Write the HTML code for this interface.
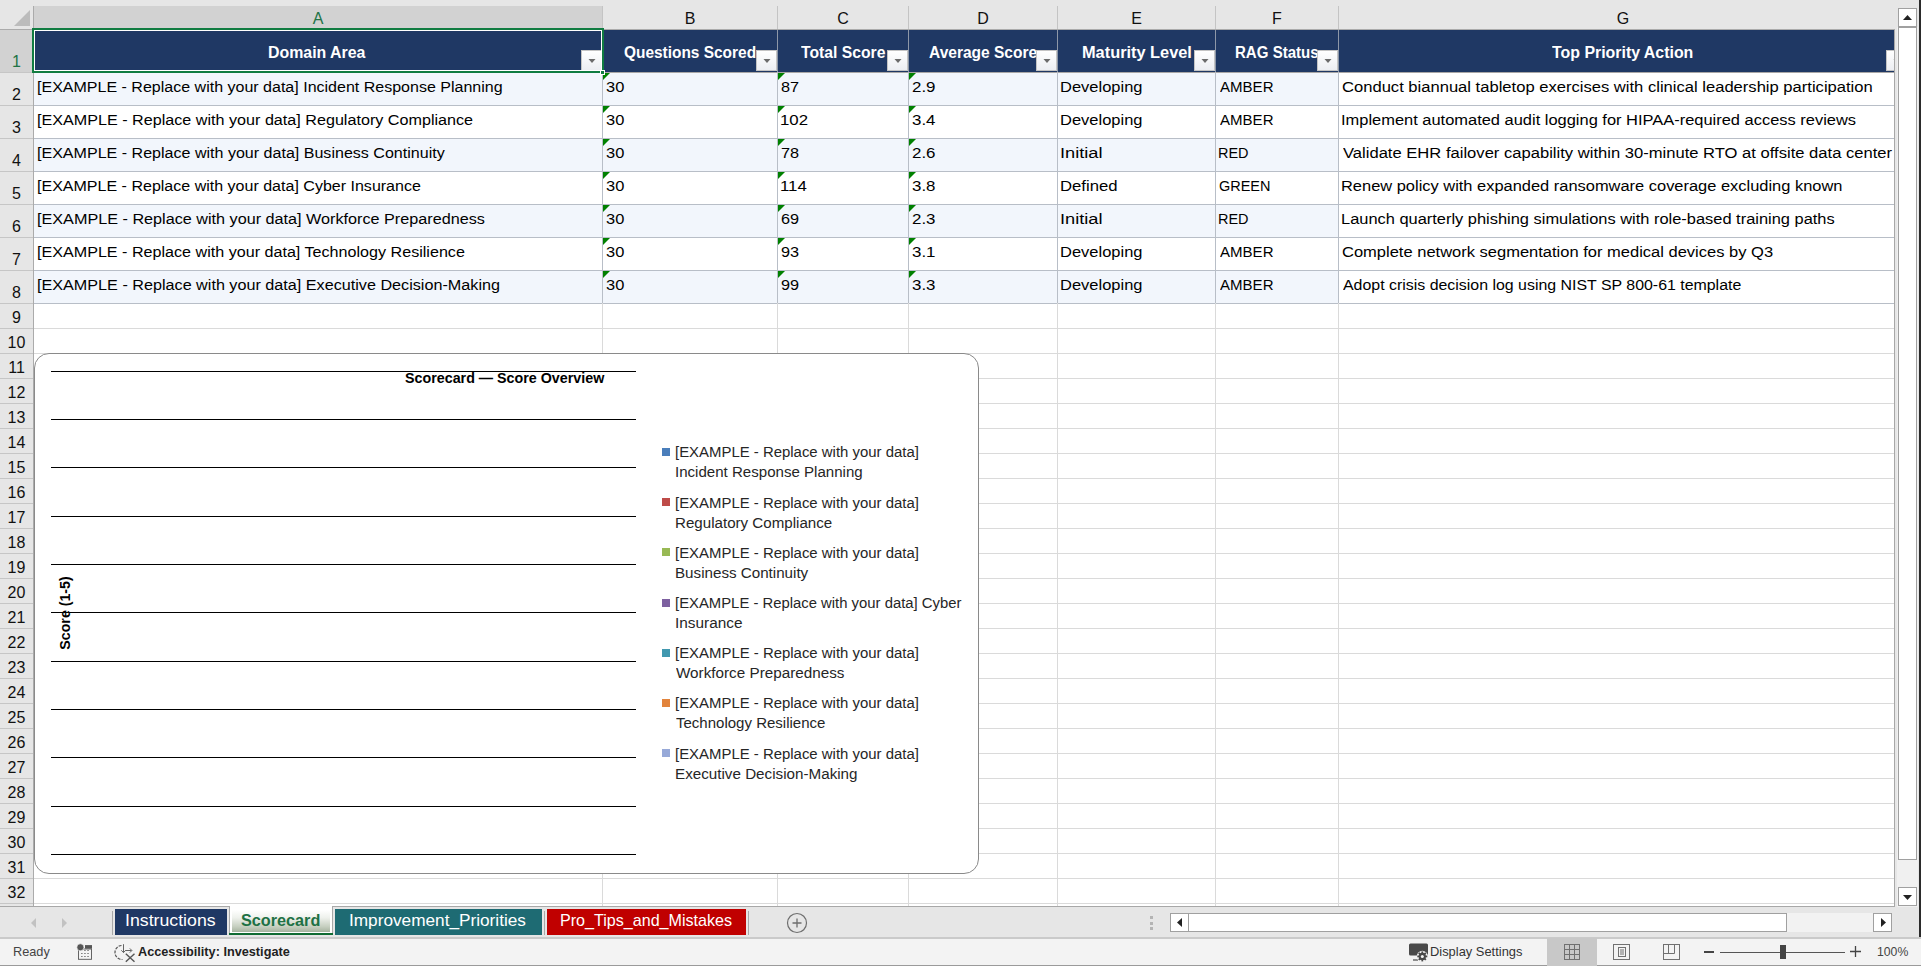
<!DOCTYPE html><html><head><meta charset="utf-8"><style>
*{margin:0;padding:0;box-sizing:border-box}
html,body{width:1921px;height:966px;overflow:hidden;background:#e6e6e6;font-family:"Liberation Sans", sans-serif;position:relative}
.a{position:absolute}
.t{position:absolute;white-space:nowrap;line-height:1}
</style></head><body>
<div class="a" style="left:34px;top:30px;width:1860px;height:876px;background:#fff;"></div>
<div class="a" style="left:34px;top:30px;width:1860px;height:42px;background:#1f3864;"></div>
<div class="a" style="left:34px;top:72px;width:1304px;height:33px;background:#f2f6fc;"></div>
<div class="a" style="left:34px;top:138px;width:1304px;height:33px;background:#f2f6fc;"></div>
<div class="a" style="left:34px;top:204px;width:1304px;height:33px;background:#f2f6fc;"></div>
<div class="a" style="left:34px;top:270px;width:1304px;height:33px;background:#f2f6fc;"></div>
<div class="a" style="left:34px;top:72px;width:1860px;height:1px;background:#a9a7a6;"></div>
<div class="a" style="left:34px;top:105px;width:1860px;height:1px;background:#b8bec7;"></div>
<div class="a" style="left:34px;top:138px;width:1860px;height:1px;background:#b8bec7;"></div>
<div class="a" style="left:34px;top:171px;width:1860px;height:1px;background:#b8bec7;"></div>
<div class="a" style="left:34px;top:204px;width:1860px;height:1px;background:#b8bec7;"></div>
<div class="a" style="left:34px;top:237px;width:1860px;height:1px;background:#b8bec7;"></div>
<div class="a" style="left:34px;top:270px;width:1860px;height:1px;background:#b8bec7;"></div>
<div class="a" style="left:34px;top:303px;width:1860px;height:1px;background:#b8bec7;"></div>
<div class="a" style="left:34px;top:328px;width:1860px;height:1px;background:#dadada;"></div>
<div class="a" style="left:34px;top:353px;width:1860px;height:1px;background:#dadada;"></div>
<div class="a" style="left:34px;top:378px;width:1860px;height:1px;background:#dadada;"></div>
<div class="a" style="left:34px;top:403px;width:1860px;height:1px;background:#dadada;"></div>
<div class="a" style="left:34px;top:428px;width:1860px;height:1px;background:#dadada;"></div>
<div class="a" style="left:34px;top:453px;width:1860px;height:1px;background:#dadada;"></div>
<div class="a" style="left:34px;top:478px;width:1860px;height:1px;background:#dadada;"></div>
<div class="a" style="left:34px;top:503px;width:1860px;height:1px;background:#dadada;"></div>
<div class="a" style="left:34px;top:528px;width:1860px;height:1px;background:#dadada;"></div>
<div class="a" style="left:34px;top:553px;width:1860px;height:1px;background:#dadada;"></div>
<div class="a" style="left:34px;top:578px;width:1860px;height:1px;background:#dadada;"></div>
<div class="a" style="left:34px;top:603px;width:1860px;height:1px;background:#dadada;"></div>
<div class="a" style="left:34px;top:628px;width:1860px;height:1px;background:#dadada;"></div>
<div class="a" style="left:34px;top:653px;width:1860px;height:1px;background:#dadada;"></div>
<div class="a" style="left:34px;top:678px;width:1860px;height:1px;background:#dadada;"></div>
<div class="a" style="left:34px;top:703px;width:1860px;height:1px;background:#dadada;"></div>
<div class="a" style="left:34px;top:728px;width:1860px;height:1px;background:#dadada;"></div>
<div class="a" style="left:34px;top:753px;width:1860px;height:1px;background:#dadada;"></div>
<div class="a" style="left:34px;top:778px;width:1860px;height:1px;background:#dadada;"></div>
<div class="a" style="left:34px;top:803px;width:1860px;height:1px;background:#dadada;"></div>
<div class="a" style="left:34px;top:828px;width:1860px;height:1px;background:#dadada;"></div>
<div class="a" style="left:34px;top:853px;width:1860px;height:1px;background:#dadada;"></div>
<div class="a" style="left:34px;top:878px;width:1860px;height:1px;background:#dadada;"></div>
<div class="a" style="left:34px;top:903px;width:1860px;height:1px;background:#dadada;"></div>
<div class="a" style="left:602px;top:30px;width:1px;height:42px;background:#8d97a8;"></div>
<div class="a" style="left:602px;top:72px;width:1px;height:231px;background:#b8bec7;"></div>
<div class="a" style="left:602px;top:303px;width:1px;height:603px;background:#dadada;"></div>
<div class="a" style="left:777px;top:30px;width:1px;height:42px;background:#8d97a8;"></div>
<div class="a" style="left:777px;top:72px;width:1px;height:231px;background:#b8bec7;"></div>
<div class="a" style="left:777px;top:303px;width:1px;height:603px;background:#dadada;"></div>
<div class="a" style="left:908px;top:30px;width:1px;height:42px;background:#8d97a8;"></div>
<div class="a" style="left:908px;top:72px;width:1px;height:231px;background:#b8bec7;"></div>
<div class="a" style="left:908px;top:303px;width:1px;height:603px;background:#dadada;"></div>
<div class="a" style="left:1057px;top:30px;width:1px;height:42px;background:#8d97a8;"></div>
<div class="a" style="left:1057px;top:72px;width:1px;height:231px;background:#b8bec7;"></div>
<div class="a" style="left:1057px;top:303px;width:1px;height:603px;background:#dadada;"></div>
<div class="a" style="left:1215px;top:30px;width:1px;height:42px;background:#8d97a8;"></div>
<div class="a" style="left:1215px;top:72px;width:1px;height:231px;background:#b8bec7;"></div>
<div class="a" style="left:1215px;top:303px;width:1px;height:603px;background:#dadada;"></div>
<div class="a" style="left:1338px;top:30px;width:1px;height:42px;background:#8d97a8;"></div>
<div class="a" style="left:1338px;top:72px;width:1px;height:231px;background:#b8bec7;"></div>
<div class="a" style="left:1338px;top:303px;width:1px;height:603px;background:#dadada;"></div>
<div class="a" style="left:1894px;top:29px;width:1px;height:877px;background:#a8a8a8;"></div>
<div class="a" style="left:0px;top:906px;width:1895px;height:1px;background:#a8a8a8;"></div>
<div class="a" style="left:34px;top:6px;width:568px;height:23px;background:#d2d2d2;"></div>
<div class="t" style="left:34px;top:10.76px;width:568px;text-align:center;font-size:16px;font-weight:400;color:#217346;">A</div>
<div class="t" style="left:603px;top:10.76px;width:174px;text-align:center;font-size:16px;font-weight:400;color:#111;">B</div>
<div class="a" style="left:602px;top:6px;width:1px;height:23px;background:#c4c4c4;"></div>
<div class="t" style="left:778px;top:10.76px;width:130px;text-align:center;font-size:16px;font-weight:400;color:#111;">C</div>
<div class="a" style="left:777px;top:6px;width:1px;height:23px;background:#c4c4c4;"></div>
<div class="t" style="left:909px;top:10.76px;width:148px;text-align:center;font-size:16px;font-weight:400;color:#111;">D</div>
<div class="a" style="left:908px;top:6px;width:1px;height:23px;background:#c4c4c4;"></div>
<div class="t" style="left:1058px;top:10.76px;width:157px;text-align:center;font-size:16px;font-weight:400;color:#111;">E</div>
<div class="a" style="left:1057px;top:6px;width:1px;height:23px;background:#c4c4c4;"></div>
<div class="t" style="left:1216px;top:10.76px;width:122px;text-align:center;font-size:16px;font-weight:400;color:#111;">F</div>
<div class="a" style="left:1215px;top:6px;width:1px;height:23px;background:#c4c4c4;"></div>
<div class="t" style="left:1339px;top:10.76px;width:568px;text-align:center;font-size:16px;font-weight:400;color:#111;">G</div>
<div class="a" style="left:1338px;top:6px;width:1px;height:23px;background:#c4c4c4;"></div>
<div class="a" style="left:0px;top:29px;width:1894px;height:1px;background:#ababab;"></div>
<svg class="a" style="left:0;top:0" width="34" height="29"><polygon points="14,26 30,26 30,10" fill="#bcbcbc"/></svg>
<div class="a" style="left:33px;top:6px;width:1px;height:900px;background:#ababab;"></div>
<div class="a" style="left:0px;top:30px;width:33px;height:42px;background:#d2d2d2;"></div>
<div class="a" style="left:0px;top:72px;width:33px;height:1px;background:#c6c6c6;"></div>
<div class="t" style="left:0px;top:53.96px;width:33px;text-align:center;font-size:16px;font-weight:400;color:#217346;">1</div>
<div class="a" style="left:0px;top:105px;width:33px;height:1px;background:#c6c6c6;"></div>
<div class="t" style="left:0px;top:86.96px;width:33px;text-align:center;font-size:16px;font-weight:400;color:#111;">2</div>
<div class="a" style="left:0px;top:138px;width:33px;height:1px;background:#c6c6c6;"></div>
<div class="t" style="left:0px;top:119.96px;width:33px;text-align:center;font-size:16px;font-weight:400;color:#111;">3</div>
<div class="a" style="left:0px;top:171px;width:33px;height:1px;background:#c6c6c6;"></div>
<div class="t" style="left:0px;top:152.96px;width:33px;text-align:center;font-size:16px;font-weight:400;color:#111;">4</div>
<div class="a" style="left:0px;top:204px;width:33px;height:1px;background:#c6c6c6;"></div>
<div class="t" style="left:0px;top:185.96px;width:33px;text-align:center;font-size:16px;font-weight:400;color:#111;">5</div>
<div class="a" style="left:0px;top:237px;width:33px;height:1px;background:#c6c6c6;"></div>
<div class="t" style="left:0px;top:218.96px;width:33px;text-align:center;font-size:16px;font-weight:400;color:#111;">6</div>
<div class="a" style="left:0px;top:270px;width:33px;height:1px;background:#c6c6c6;"></div>
<div class="t" style="left:0px;top:251.96px;width:33px;text-align:center;font-size:16px;font-weight:400;color:#111;">7</div>
<div class="a" style="left:0px;top:303px;width:33px;height:1px;background:#c6c6c6;"></div>
<div class="t" style="left:0px;top:284.96px;width:33px;text-align:center;font-size:16px;font-weight:400;color:#111;">8</div>
<div class="a" style="left:0px;top:328px;width:33px;height:1px;background:#c6c6c6;"></div>
<div class="t" style="left:0px;top:309.96px;width:33px;text-align:center;font-size:16px;font-weight:400;color:#111;">9</div>
<div class="a" style="left:0px;top:353px;width:33px;height:1px;background:#c6c6c6;"></div>
<div class="t" style="left:0px;top:334.96px;width:33px;text-align:center;font-size:16px;font-weight:400;color:#111;">10</div>
<div class="a" style="left:0px;top:378px;width:33px;height:1px;background:#c6c6c6;"></div>
<div class="t" style="left:0px;top:359.96px;width:33px;text-align:center;font-size:16px;font-weight:400;color:#111;">11</div>
<div class="a" style="left:0px;top:403px;width:33px;height:1px;background:#c6c6c6;"></div>
<div class="t" style="left:0px;top:384.96px;width:33px;text-align:center;font-size:16px;font-weight:400;color:#111;">12</div>
<div class="a" style="left:0px;top:428px;width:33px;height:1px;background:#c6c6c6;"></div>
<div class="t" style="left:0px;top:409.96px;width:33px;text-align:center;font-size:16px;font-weight:400;color:#111;">13</div>
<div class="a" style="left:0px;top:453px;width:33px;height:1px;background:#c6c6c6;"></div>
<div class="t" style="left:0px;top:434.96px;width:33px;text-align:center;font-size:16px;font-weight:400;color:#111;">14</div>
<div class="a" style="left:0px;top:478px;width:33px;height:1px;background:#c6c6c6;"></div>
<div class="t" style="left:0px;top:459.96px;width:33px;text-align:center;font-size:16px;font-weight:400;color:#111;">15</div>
<div class="a" style="left:0px;top:503px;width:33px;height:1px;background:#c6c6c6;"></div>
<div class="t" style="left:0px;top:484.96px;width:33px;text-align:center;font-size:16px;font-weight:400;color:#111;">16</div>
<div class="a" style="left:0px;top:528px;width:33px;height:1px;background:#c6c6c6;"></div>
<div class="t" style="left:0px;top:509.96px;width:33px;text-align:center;font-size:16px;font-weight:400;color:#111;">17</div>
<div class="a" style="left:0px;top:553px;width:33px;height:1px;background:#c6c6c6;"></div>
<div class="t" style="left:0px;top:534.96px;width:33px;text-align:center;font-size:16px;font-weight:400;color:#111;">18</div>
<div class="a" style="left:0px;top:578px;width:33px;height:1px;background:#c6c6c6;"></div>
<div class="t" style="left:0px;top:559.96px;width:33px;text-align:center;font-size:16px;font-weight:400;color:#111;">19</div>
<div class="a" style="left:0px;top:603px;width:33px;height:1px;background:#c6c6c6;"></div>
<div class="t" style="left:0px;top:584.96px;width:33px;text-align:center;font-size:16px;font-weight:400;color:#111;">20</div>
<div class="a" style="left:0px;top:628px;width:33px;height:1px;background:#c6c6c6;"></div>
<div class="t" style="left:0px;top:609.96px;width:33px;text-align:center;font-size:16px;font-weight:400;color:#111;">21</div>
<div class="a" style="left:0px;top:653px;width:33px;height:1px;background:#c6c6c6;"></div>
<div class="t" style="left:0px;top:634.96px;width:33px;text-align:center;font-size:16px;font-weight:400;color:#111;">22</div>
<div class="a" style="left:0px;top:678px;width:33px;height:1px;background:#c6c6c6;"></div>
<div class="t" style="left:0px;top:659.96px;width:33px;text-align:center;font-size:16px;font-weight:400;color:#111;">23</div>
<div class="a" style="left:0px;top:703px;width:33px;height:1px;background:#c6c6c6;"></div>
<div class="t" style="left:0px;top:684.96px;width:33px;text-align:center;font-size:16px;font-weight:400;color:#111;">24</div>
<div class="a" style="left:0px;top:728px;width:33px;height:1px;background:#c6c6c6;"></div>
<div class="t" style="left:0px;top:709.96px;width:33px;text-align:center;font-size:16px;font-weight:400;color:#111;">25</div>
<div class="a" style="left:0px;top:753px;width:33px;height:1px;background:#c6c6c6;"></div>
<div class="t" style="left:0px;top:734.96px;width:33px;text-align:center;font-size:16px;font-weight:400;color:#111;">26</div>
<div class="a" style="left:0px;top:778px;width:33px;height:1px;background:#c6c6c6;"></div>
<div class="t" style="left:0px;top:759.96px;width:33px;text-align:center;font-size:16px;font-weight:400;color:#111;">27</div>
<div class="a" style="left:0px;top:803px;width:33px;height:1px;background:#c6c6c6;"></div>
<div class="t" style="left:0px;top:784.96px;width:33px;text-align:center;font-size:16px;font-weight:400;color:#111;">28</div>
<div class="a" style="left:0px;top:828px;width:33px;height:1px;background:#c6c6c6;"></div>
<div class="t" style="left:0px;top:809.96px;width:33px;text-align:center;font-size:16px;font-weight:400;color:#111;">29</div>
<div class="a" style="left:0px;top:853px;width:33px;height:1px;background:#c6c6c6;"></div>
<div class="t" style="left:0px;top:834.96px;width:33px;text-align:center;font-size:16px;font-weight:400;color:#111;">30</div>
<div class="a" style="left:0px;top:878px;width:33px;height:1px;background:#c6c6c6;"></div>
<div class="t" style="left:0px;top:859.96px;width:33px;text-align:center;font-size:16px;font-weight:400;color:#111;">31</div>
<div class="a" style="left:0px;top:903px;width:33px;height:1px;background:#c6c6c6;"></div>
<div class="t" style="left:0px;top:884.96px;width:33px;text-align:center;font-size:16px;font-weight:400;color:#111;">32</div>
<div class="t" style="left:268.42px;top:45.26px;font-size:16px;font-weight:700;color:#fff;transform:scaleX(0.9928);transform-origin:0 0">Domain Area</div>
<div class="t" style="left:624.13px;top:45.26px;font-size:16px;font-weight:700;color:#fff;transform:scaleX(0.9645);transform-origin:0 0">Questions Scored</div>
<div class="t" style="left:800.94px;top:45.26px;font-size:16px;font-weight:700;color:#fff;transform:scaleX(0.9816);transform-origin:0 0">Total Score</div>
<div class="t" style="left:928.99px;top:45.26px;font-size:16px;font-weight:700;color:#fff;transform:scaleX(0.9699);transform-origin:0 0">Average Score</div>
<div class="t" style="left:1081.62px;top:45.26px;font-size:16px;font-weight:700;color:#fff;transform:scaleX(1.0214);transform-origin:0 0">Maturity Level</div>
<div class="t" style="left:1235.00px;top:45.26px;font-size:16px;font-weight:700;color:#fff;transform:scaleX(0.9409);transform-origin:0 0">RAG Status</div>
<div class="t" style="left:1552.44px;top:45.26px;font-size:16px;font-weight:700;color:#fff;transform:scaleX(0.9938);transform-origin:0 0">Top Priority Action</div>
<div class="a" style="left:581px;top:50px;width:21px;height:21px;background:linear-gradient(#fff,#eceef2);border:1px solid #c4c4c4;overflow:hidden"><svg class="a" style="left:5px;top:7px" width="10" height="6"><polygon points="1.5,1 8.5,1 5,5" fill="#6b6b6b"/></svg></div>
<div class="a" style="left:756px;top:50px;width:21px;height:21px;background:linear-gradient(#fff,#eceef2);border:1px solid #c4c4c4;overflow:hidden"><svg class="a" style="left:5px;top:7px" width="10" height="6"><polygon points="1.5,1 8.5,1 5,5" fill="#6b6b6b"/></svg></div>
<div class="a" style="left:887px;top:50px;width:21px;height:21px;background:linear-gradient(#fff,#eceef2);border:1px solid #c4c4c4;overflow:hidden"><svg class="a" style="left:5px;top:7px" width="10" height="6"><polygon points="1.5,1 8.5,1 5,5" fill="#6b6b6b"/></svg></div>
<div class="a" style="left:1036px;top:50px;width:21px;height:21px;background:linear-gradient(#fff,#eceef2);border:1px solid #c4c4c4;overflow:hidden"><svg class="a" style="left:5px;top:7px" width="10" height="6"><polygon points="1.5,1 8.5,1 5,5" fill="#6b6b6b"/></svg></div>
<div class="a" style="left:1194px;top:50px;width:21px;height:21px;background:linear-gradient(#fff,#eceef2);border:1px solid #c4c4c4;overflow:hidden"><svg class="a" style="left:5px;top:7px" width="10" height="6"><polygon points="1.5,1 8.5,1 5,5" fill="#6b6b6b"/></svg></div>
<div class="a" style="left:1317px;top:50px;width:21px;height:21px;background:linear-gradient(#fff,#eceef2);border:1px solid #c4c4c4;overflow:hidden"><svg class="a" style="left:5px;top:7px" width="10" height="6"><polygon points="1.5,1 8.5,1 5,5" fill="#6b6b6b"/></svg></div>
<div class="a" style="left:1886px;top:50px;width:8px;height:21px;background:linear-gradient(#fff,#eceef2);border:1px solid #c4c4c4;border-right:none;overflow:hidden"><svg class="a" style="left:5px;top:7px" width="10" height="6"><polygon points="1.5,1 8.5,1 5,5" fill="#6b6b6b"/></svg></div>
<div class="t" style="left:37.48px;top:79.33px;font-size:15.2px;font-weight:400;color:#000;transform:scaleX(1.0546);transform-origin:0 0">[EXAMPLE - Replace with your data] Incident Response Planning</div>
<div class="t" style="left:606.11px;top:79.33px;font-size:15.2px;font-weight:400;color:#000;transform:scaleX(1.0817);transform-origin:0 0">30</div>
<div class="t" style="left:780.95px;top:79.33px;font-size:15.2px;font-weight:400;color:#000;transform:scaleX(1.0707);transform-origin:0 0">87</div>
<div class="t" style="left:911.75px;top:79.33px;font-size:15.2px;font-weight:400;color:#000;transform:scaleX(1.1135);transform-origin:0 0">2.9</div>
<div class="t" style="left:1060.28px;top:79.33px;font-size:15.2px;font-weight:400;color:#000;transform:scaleX(1.0854);transform-origin:0 0">Developing</div>
<div class="t" style="left:1219.60px;top:79.33px;font-size:15.2px;font-weight:400;color:#000;transform:scaleX(0.9904);transform-origin:0 0">AMBER</div>
<div class="t" style="left:1341.77px;top:79.33px;font-size:15.2px;font-weight:400;color:#000;transform:scaleX(1.0914);transform-origin:0 0">Conduct biannual tabletop exercises with clinical leadership participation</div>
<svg class="a" style="left:603px;top:73px" width="8" height="8"><polygon points="0,0 7,0 0,7" fill="#008000"/></svg>
<svg class="a" style="left:778px;top:73px" width="8" height="8"><polygon points="0,0 7,0 0,7" fill="#008000"/></svg>
<svg class="a" style="left:909px;top:73px" width="8" height="8"><polygon points="0,0 7,0 0,7" fill="#008000"/></svg>
<div class="t" style="left:37.47px;top:112.33px;font-size:15.2px;font-weight:400;color:#000;transform:scaleX(1.0629);transform-origin:0 0">[EXAMPLE - Replace with your data] Regulatory Compliance</div>
<div class="t" style="left:606.11px;top:112.33px;font-size:15.2px;font-weight:400;color:#000;transform:scaleX(1.0817);transform-origin:0 0">30</div>
<div class="t" style="left:780.42px;top:112.33px;font-size:15.2px;font-weight:400;color:#000;transform:scaleX(1.1062);transform-origin:0 0">102</div>
<div class="t" style="left:911.75px;top:112.33px;font-size:15.2px;font-weight:400;color:#000;transform:scaleX(1.1135);transform-origin:0 0">3.4</div>
<div class="t" style="left:1060.28px;top:112.33px;font-size:15.2px;font-weight:400;color:#000;transform:scaleX(1.0854);transform-origin:0 0">Developing</div>
<div class="t" style="left:1219.60px;top:112.33px;font-size:15.2px;font-weight:400;color:#000;transform:scaleX(0.9904);transform-origin:0 0">AMBER</div>
<div class="t" style="left:1341.12px;top:112.33px;font-size:15.2px;font-weight:400;color:#000;transform:scaleX(1.0824);transform-origin:0 0">Implement automated audit logging for HIPAA-required access reviews</div>
<svg class="a" style="left:603px;top:106px" width="8" height="8"><polygon points="0,0 7,0 0,7" fill="#008000"/></svg>
<svg class="a" style="left:778px;top:106px" width="8" height="8"><polygon points="0,0 7,0 0,7" fill="#008000"/></svg>
<svg class="a" style="left:909px;top:106px" width="8" height="8"><polygon points="0,0 7,0 0,7" fill="#008000"/></svg>
<div class="t" style="left:37.48px;top:145.33px;font-size:15.2px;font-weight:400;color:#000;transform:scaleX(1.0568);transform-origin:0 0">[EXAMPLE - Replace with your data] Business Continuity</div>
<div class="t" style="left:606.11px;top:145.33px;font-size:15.2px;font-weight:400;color:#000;transform:scaleX(1.0817);transform-origin:0 0">30</div>
<div class="t" style="left:780.95px;top:145.33px;font-size:15.2px;font-weight:400;color:#000;transform:scaleX(1.0707);transform-origin:0 0">78</div>
<div class="t" style="left:911.75px;top:145.33px;font-size:15.2px;font-weight:400;color:#000;transform:scaleX(1.1135);transform-origin:0 0">2.6</div>
<div class="t" style="left:1059.96px;top:145.33px;font-size:15.2px;font-weight:400;color:#000;transform:scaleX(1.1998);transform-origin:0 0">Initial</div>
<div class="t" style="left:1218.44px;top:145.33px;font-size:15.2px;font-weight:400;color:#000;transform:scaleX(0.9525);transform-origin:0 0">RED</div>
<div class="t" style="left:1342.60px;top:145.33px;font-size:15.2px;font-weight:400;color:#000;transform:scaleX(1.0919);transform-origin:0 0">Validate EHR failover capability within 30-minute RTO at offsite data center</div>
<svg class="a" style="left:603px;top:139px" width="8" height="8"><polygon points="0,0 7,0 0,7" fill="#008000"/></svg>
<svg class="a" style="left:778px;top:139px" width="8" height="8"><polygon points="0,0 7,0 0,7" fill="#008000"/></svg>
<svg class="a" style="left:909px;top:139px" width="8" height="8"><polygon points="0,0 7,0 0,7" fill="#008000"/></svg>
<div class="t" style="left:37.48px;top:178.33px;font-size:15.2px;font-weight:400;color:#000;transform:scaleX(1.0551);transform-origin:0 0">[EXAMPLE - Replace with your data] Cyber Insurance</div>
<div class="t" style="left:606.11px;top:178.33px;font-size:15.2px;font-weight:400;color:#000;transform:scaleX(1.0817);transform-origin:0 0">30</div>
<div class="t" style="left:780.42px;top:178.33px;font-size:15.2px;font-weight:400;color:#000;transform:scaleX(1.1062);transform-origin:0 0">114</div>
<div class="t" style="left:911.75px;top:178.33px;font-size:15.2px;font-weight:400;color:#000;transform:scaleX(1.1135);transform-origin:0 0">3.8</div>
<div class="t" style="left:1060.26px;top:178.33px;font-size:15.2px;font-weight:400;color:#000;transform:scaleX(1.1009);transform-origin:0 0">Defined</div>
<div class="t" style="left:1218.88px;top:178.33px;font-size:15.2px;font-weight:400;color:#000;transform:scaleX(0.9522);transform-origin:0 0">GREEN</div>
<div class="t" style="left:1341.28px;top:178.33px;font-size:15.2px;font-weight:400;color:#000;transform:scaleX(1.0819);transform-origin:0 0">Renew policy with expanded ransomware coverage excluding known</div>
<svg class="a" style="left:603px;top:172px" width="8" height="8"><polygon points="0,0 7,0 0,7" fill="#008000"/></svg>
<svg class="a" style="left:778px;top:172px" width="8" height="8"><polygon points="0,0 7,0 0,7" fill="#008000"/></svg>
<svg class="a" style="left:909px;top:172px" width="8" height="8"><polygon points="0,0 7,0 0,7" fill="#008000"/></svg>
<div class="t" style="left:37.47px;top:211.33px;font-size:15.2px;font-weight:400;color:#000;transform:scaleX(1.0661);transform-origin:0 0">[EXAMPLE - Replace with your data] Workforce Preparedness</div>
<div class="t" style="left:606.11px;top:211.33px;font-size:15.2px;font-weight:400;color:#000;transform:scaleX(1.0817);transform-origin:0 0">30</div>
<div class="t" style="left:780.95px;top:211.33px;font-size:15.2px;font-weight:400;color:#000;transform:scaleX(1.0707);transform-origin:0 0">69</div>
<div class="t" style="left:911.75px;top:211.33px;font-size:15.2px;font-weight:400;color:#000;transform:scaleX(1.1135);transform-origin:0 0">2.3</div>
<div class="t" style="left:1059.96px;top:211.33px;font-size:15.2px;font-weight:400;color:#000;transform:scaleX(1.1998);transform-origin:0 0">Initial</div>
<div class="t" style="left:1218.44px;top:211.33px;font-size:15.2px;font-weight:400;color:#000;transform:scaleX(0.9525);transform-origin:0 0">RED</div>
<div class="t" style="left:1341.29px;top:211.33px;font-size:15.2px;font-weight:400;color:#000;transform:scaleX(1.0809);transform-origin:0 0">Launch quarterly phishing simulations with role-based training paths</div>
<svg class="a" style="left:603px;top:205px" width="8" height="8"><polygon points="0,0 7,0 0,7" fill="#008000"/></svg>
<svg class="a" style="left:778px;top:205px" width="8" height="8"><polygon points="0,0 7,0 0,7" fill="#008000"/></svg>
<svg class="a" style="left:909px;top:205px" width="8" height="8"><polygon points="0,0 7,0 0,7" fill="#008000"/></svg>
<div class="t" style="left:37.47px;top:244.33px;font-size:15.2px;font-weight:400;color:#000;transform:scaleX(1.0611);transform-origin:0 0">[EXAMPLE - Replace with your data] Technology Resilience</div>
<div class="t" style="left:606.11px;top:244.33px;font-size:15.2px;font-weight:400;color:#000;transform:scaleX(1.0817);transform-origin:0 0">30</div>
<div class="t" style="left:780.95px;top:244.33px;font-size:15.2px;font-weight:400;color:#000;transform:scaleX(1.0707);transform-origin:0 0">93</div>
<div class="t" style="left:911.75px;top:244.33px;font-size:15.2px;font-weight:400;color:#000;transform:scaleX(1.1135);transform-origin:0 0">3.1</div>
<div class="t" style="left:1060.28px;top:244.33px;font-size:15.2px;font-weight:400;color:#000;transform:scaleX(1.0854);transform-origin:0 0">Developing</div>
<div class="t" style="left:1219.60px;top:244.33px;font-size:15.2px;font-weight:400;color:#000;transform:scaleX(0.9904);transform-origin:0 0">AMBER</div>
<div class="t" style="left:1341.77px;top:244.33px;font-size:15.2px;font-weight:400;color:#000;transform:scaleX(1.0865);transform-origin:0 0">Complete network segmentation for medical devices by Q3</div>
<svg class="a" style="left:603px;top:238px" width="8" height="8"><polygon points="0,0 7,0 0,7" fill="#008000"/></svg>
<svg class="a" style="left:778px;top:238px" width="8" height="8"><polygon points="0,0 7,0 0,7" fill="#008000"/></svg>
<svg class="a" style="left:909px;top:238px" width="8" height="8"><polygon points="0,0 7,0 0,7" fill="#008000"/></svg>
<div class="t" style="left:37.47px;top:277.33px;font-size:15.2px;font-weight:400;color:#000;transform:scaleX(1.0650);transform-origin:0 0">[EXAMPLE - Replace with your data] Executive Decision-Making</div>
<div class="t" style="left:606.11px;top:277.33px;font-size:15.2px;font-weight:400;color:#000;transform:scaleX(1.0817);transform-origin:0 0">30</div>
<div class="t" style="left:780.95px;top:277.33px;font-size:15.2px;font-weight:400;color:#000;transform:scaleX(1.0707);transform-origin:0 0">99</div>
<div class="t" style="left:911.75px;top:277.33px;font-size:15.2px;font-weight:400;color:#000;transform:scaleX(1.1135);transform-origin:0 0">3.3</div>
<div class="t" style="left:1060.28px;top:277.33px;font-size:15.2px;font-weight:400;color:#000;transform:scaleX(1.0854);transform-origin:0 0">Developing</div>
<div class="t" style="left:1219.60px;top:277.33px;font-size:15.2px;font-weight:400;color:#000;transform:scaleX(0.9904);transform-origin:0 0">AMBER</div>
<div class="t" style="left:1342.60px;top:277.33px;font-size:15.2px;font-weight:400;color:#000;transform:scaleX(1.0476);transform-origin:0 0">Adopt crisis decision log using NIST SP 800-61 template</div>
<svg class="a" style="left:603px;top:271px" width="8" height="8"><polygon points="0,0 7,0 0,7" fill="#008000"/></svg>
<svg class="a" style="left:778px;top:271px" width="8" height="8"><polygon points="0,0 7,0 0,7" fill="#008000"/></svg>
<svg class="a" style="left:909px;top:271px" width="8" height="8"><polygon points="0,0 7,0 0,7" fill="#008000"/></svg>
<div class="a" style="left:32px;top:28px;width:572px;height:45px;border:2px solid #107c41"></div>
<div class="a" style="left:34px;top:30px;width:568px;height:41px;border:1px solid #fff"></div>
<div class="a" style="left:600px;top:70px;width:5px;height:5px;background:#107c41;border:1px solid #fff"></div>
<div class="a" style="left:34px;top:353px;width:945px;height:521px;background:#fff;border:1px solid #8a8a8a;border-radius:15px"></div>
<div class="a" style="left:51px;top:371px;width:585px;height:1px;background:#000"></div>
<div class="a" style="left:51px;top:419px;width:585px;height:1px;background:#000"></div>
<div class="a" style="left:51px;top:467px;width:585px;height:1px;background:#000"></div>
<div class="a" style="left:51px;top:516px;width:585px;height:1px;background:#000"></div>
<div class="a" style="left:51px;top:564px;width:585px;height:1px;background:#000"></div>
<div class="a" style="left:51px;top:612px;width:585px;height:1px;background:#000"></div>
<div class="a" style="left:51px;top:661px;width:585px;height:1px;background:#000"></div>
<div class="a" style="left:51px;top:709px;width:585px;height:1px;background:#000"></div>
<div class="a" style="left:51px;top:757px;width:585px;height:1px;background:#000"></div>
<div class="a" style="left:51px;top:806px;width:585px;height:1px;background:#000"></div>
<div class="a" style="left:51px;top:854px;width:585px;height:1px;background:#000"></div>
<div class="t" style="left:405.21px;top:371.14px;font-size:14.6px;font-weight:700;color:#000;transform:scaleX(0.9787);transform-origin:0 0">Scorecard — Score Overview</div>
<div class="t" style="left:64.8px;top:613px;font-size:14.2px;font-weight:700;color:#000;transform:translate(-50%,-50%) rotate(-90deg);transform-origin:center">Score (1-5)</div>
<div class="a" style="left:662px;top:448px;width:8px;height:8px;background:#4a7ebb;"></div>
<div class="t" style="left:675.05px;top:444.43px;font-size:15.2px;font-weight:400;color:#262626;transform:scaleX(0.9826);transform-origin:0 0">[EXAMPLE - Replace with your data]</div>
<div class="t" style="left:674.74px;top:464.43px;font-size:15.2px;font-weight:400;color:#262626;transform:scaleX(0.9922);transform-origin:0 0">Incident Response Planning</div>
<div class="a" style="left:662px;top:498px;width:8px;height:8px;background:#be4b48;"></div>
<div class="t" style="left:675.05px;top:494.63px;font-size:15.2px;font-weight:400;color:#262626;transform:scaleX(0.9826);transform-origin:0 0">[EXAMPLE - Replace with your data]</div>
<div class="t" style="left:674.89px;top:514.63px;font-size:15.2px;font-weight:400;color:#262626;transform:scaleX(0.9960);transform-origin:0 0">Regulatory Compliance</div>
<div class="a" style="left:662px;top:548px;width:8px;height:8px;background:#98b954;"></div>
<div class="t" style="left:675.05px;top:544.83px;font-size:15.2px;font-weight:400;color:#262626;transform:scaleX(0.9826);transform-origin:0 0">[EXAMPLE - Replace with your data]</div>
<div class="t" style="left:674.89px;top:564.83px;font-size:15.2px;font-weight:400;color:#262626;transform:scaleX(0.9987);transform-origin:0 0">Business Continuity</div>
<div class="a" style="left:662px;top:599px;width:8px;height:8px;background:#7d60a0;"></div>
<div class="t" style="left:675.06px;top:595.03px;font-size:15.2px;font-weight:400;color:#262626;transform:scaleX(0.9778);transform-origin:0 0">[EXAMPLE - Replace with your data] Cyber</div>
<div class="t" style="left:674.72px;top:615.03px;font-size:15.2px;font-weight:400;color:#262626;transform:scaleX(1.0118);transform-origin:0 0">Insurance</div>
<div class="a" style="left:662px;top:649px;width:8px;height:8px;background:#4198af;"></div>
<div class="t" style="left:675.05px;top:645.23px;font-size:15.2px;font-weight:400;color:#262626;transform:scaleX(0.9826);transform-origin:0 0">[EXAMPLE - Replace with your data]</div>
<div class="t" style="left:676.10px;top:665.23px;font-size:15.2px;font-weight:400;color:#262626;transform:scaleX(1.0043);transform-origin:0 0">Workforce Preparedness</div>
<div class="a" style="left:662px;top:699px;width:8px;height:8px;background:#e2843c;"></div>
<div class="t" style="left:675.05px;top:695.43px;font-size:15.2px;font-weight:400;color:#262626;transform:scaleX(0.9826);transform-origin:0 0">[EXAMPLE - Replace with your data]</div>
<div class="t" style="left:675.80px;top:715.43px;font-size:15.2px;font-weight:400;color:#262626;transform:scaleX(0.9888);transform-origin:0 0">Technology Resilience</div>
<div class="a" style="left:662px;top:749px;width:8px;height:8px;background:#97a9d8;"></div>
<div class="t" style="left:675.05px;top:745.63px;font-size:15.2px;font-weight:400;color:#262626;transform:scaleX(0.9826);transform-origin:0 0">[EXAMPLE - Replace with your data]</div>
<div class="t" style="left:674.88px;top:765.63px;font-size:15.2px;font-weight:400;color:#262626;transform:scaleX(1.0011);transform-origin:0 0">Executive Decision-Making</div>
<div class="a" style="left:0px;top:907px;width:1921px;height:31px;background:#e6e6e6;"></div>
<div class="a" style="left:0px;top:937px;width:1921px;height:1px;background:#d0d0d0;"></div>
<svg class="a" style="left:26px;top:915px" width="44" height="16"><polygon points="10,3 10,13 5,8" fill="#c2c2c2"/><polygon points="36,3 36,13 41,8" fill="#c2c2c2"/></svg>
<div class="a" style="left:112px;top:911px;width:1px;height:24px;background:#a8a8a8;"></div>
<div class="a" style="left:115px;top:909px;width:112px;height:26px;background:#1f3864;"></div>
<div class="t" style="left:124.90px;top:911.61px;font-size:17px;font-weight:400;color:#fff;transform:scaleX(1.0426);transform-origin:0 0">Instructions</div>
<div class="a" style="left:229px;top:906px;width:104px;height:29px;background:#fff;border-left:1px solid #a8a8a8;border-right:1px solid #a8a8a8"></div>
<div class="a" style="left:232px;top:910px;width:98px;height:22px;background:linear-gradient(#ffffff 0%,#eef1ec 35%,#c6cfc0 75%,#a6b39f 100%)"></div>
<div class="a" style="left:229px;top:933px;width:104px;height:2px;background:#0f6b32;"></div>
<div class="t" style="left:241.23px;top:911.61px;font-size:17px;font-weight:700;color:#1e7145;transform:scaleX(0.9537);transform-origin:0 0">Scorecard</div>
<div class="a" style="left:335px;top:909px;width:207px;height:26px;background:#1e6b73;"></div>
<div class="t" style="left:349.15px;top:911.61px;font-size:17px;font-weight:400;color:#fff;transform:scaleX(1.0125);transform-origin:0 0">Improvement_Priorities</div>
<div class="a" style="left:544px;top:911px;width:1px;height:24px;background:#a8a8a8;"></div>
<div class="a" style="left:547px;top:909px;width:199px;height:26px;background:#c00000;"></div>
<div class="t" style="left:560.21px;top:911.61px;font-size:17px;font-weight:400;color:#fff;transform:scaleX(0.9468);transform-origin:0 0">Pro_Tips_and_Mistakes</div>
<div class="a" style="left:748px;top:911px;width:1px;height:24px;background:#a8a8a8;"></div>
<svg class="a" style="left:786px;top:912px" width="22" height="22"><circle cx="11" cy="11" r="9.5" fill="none" stroke="#6e6e6e" stroke-width="1.2"/><path d="M11 6.5V15.5M6.5 11H15.5" stroke="#6e6e6e" stroke-width="1.3"/></svg>
<div class="a" style="left:1150px;top:916px;width:3px;height:3px;background:#b4b4b4"></div>
<div class="a" style="left:1150px;top:921.5px;width:3px;height:3px;background:#b4b4b4"></div>
<div class="a" style="left:1150px;top:927px;width:3px;height:3px;background:#b4b4b4"></div>
<div class="a" style="left:1170px;top:913px;width:704px;height:19px;background:#f2f2f2;"></div>
<div class="a" style="left:1170px;top:913px;width:19px;height:19px;background:#fff;border:1px solid #a0a0a0"></div>
<svg class="a" style="left:1170px;top:913px" width="19" height="19"><polygon points="12,5 12,14 7,9.5" fill="#222"/></svg>
<div class="a" style="left:1188px;top:913px;width:599px;height:19px;background:#fff;border:1px solid #a0a0a0"></div>
<div class="a" style="left:1873px;top:913px;width:19px;height:19px;background:#fff;border:1px solid #a0a0a0"></div>
<svg class="a" style="left:1873px;top:913px" width="19" height="19"><polygon points="8,5 8,14 13,9.5" fill="#222"/></svg>
<div class="a" style="left:1895px;top:0px;width:24px;height:907px;background:#e6e6e6;"></div>
<div class="a" style="left:1897px;top:27px;width:21px;height:880px;background:#f0f0f0;"></div>
<div class="a" style="left:1898px;top:8px;width:19px;height:19px;background:#fff;border:1px solid #a0a0a0"></div>
<svg class="a" style="left:1898px;top:8px" width="19" height="19"><polygon points="5,12 14,12 9.5,7" fill="#222"/></svg>
<div class="a" style="left:1898px;top:27px;width:19px;height:833px;background:#fff;border:1px solid #a0a0a0"></div>
<div class="a" style="left:1898px;top:887px;width:19px;height:19px;background:#fff;border:1px solid #a0a0a0"></div>
<svg class="a" style="left:1898px;top:887px" width="19" height="19"><polygon points="5,8 14,8 9.5,13" fill="#222"/></svg>
<div class="a" style="left:1919px;top:0px;width:2px;height:937px;background:#2b2b2b;"></div>
<div class="a" style="left:0px;top:938px;width:1921px;height:28px;background:#f3f3f3;"></div>
<div class="a" style="left:0px;top:937px;width:1921px;height:2px;background:#cacaca;"></div>
<div class="a" style="left:0px;top:965px;width:1921px;height:1px;background:#9a9a9a;"></div>
<div class="t" style="left:13.18px;top:946.25px;font-size:12.7px;font-weight:400;color:#444;transform:scaleX(1.0029);transform-origin:0 0">Ready</div>
<svg class="a" style="left:70px;top:938px" width="70" height="28"><rect x="8.5" y="11" width="13" height="10.3" fill="none" stroke="#555" stroke-width="0.9"/><rect x="15" y="7.1" width="7" height="3.6" fill="#555"/><circle cx="10.4" cy="9.3" r="3.5" fill="#555" stroke="#f3f3f3" stroke-width="0.6"/><path d="M14.2 12.5h1.5M17.3 12.5h1.5M11.1 15.5h1.5M14.2 15.5h1.5M17.3 15.5h1.5M11.1 18.5h1.5M14.2 18.5h1.5M17.3 18.5h1.5" stroke="#555" stroke-width="0.8"/><path d="M51.5 7.5A7 7 0 1 0 52.5 21.5" fill="none" stroke="#555" stroke-width="1.2" stroke-dasharray="3 1.2"/><path d="M53.5 6.2v8.3M51.3 12.3l2.2 2.3 2.2-2.3M55.5 12.5h6M59.8 10.4l2.1 2.1-2.1 2.1" fill="none" stroke="#555" stroke-width="0.9"/><path d="M55.8 15.8l8.7 8M64.5 15.8l-8.7 8" fill="none" stroke="#555" stroke-width="1.4"/></svg>
<div class="t" style="left:138.45px;top:946.25px;font-size:12.7px;font-weight:700;color:#222;transform:scaleX(1.0009);transform-origin:0 0">Accessibility: Investigate</div>
<svg class="a" style="left:1400px;top:938px" width="32" height="28"><rect x="9" y="5.5" width="19" height="12" rx="1.5" fill="#4a4a4a"/><path d="M13 22h5" stroke="#4a4a4a" stroke-width="1.2"/><circle cx="22.3" cy="18.4" r="5.6" fill="#f3f3f3"/><g fill="#4a4a4a"><circle cx="22.3" cy="18.4" r="3.6"/><rect x="21.4" y="13.4" width="1.8" height="10"/><rect x="17.3" y="17.5" width="10" height="1.8"/><rect x="21.4" y="13.4" width="1.8" height="10" transform="rotate(45 22.3 18.4)"/><rect x="21.4" y="13.4" width="1.8" height="10" transform="rotate(-45 22.3 18.4)"/></g><circle cx="22.3" cy="18.4" r="1.5" fill="#f3f3f3"/></svg>
<div class="t" style="left:1429.57px;top:946.25px;font-size:12.7px;font-weight:400;color:#333;transform:scaleX(1.0160);transform-origin:0 0">Display Settings</div>
<div class="a" style="left:1547px;top:938px;width:50px;height:28px;background:#c8c8c8;"></div>
<svg class="a" style="left:1560px;top:940px" width="130" height="24"><g fill="none" stroke="#707070" stroke-width="1"><rect x="4.5" y="4.5" width="15" height="15"/><path d="M4.5 9.5h15M4.5 14.5h15M9.5 4.5v15M14.5 4.5v15"/><rect x="53.5" y="4.5" width="16" height="15"/><rect x="58.5" y="7.5" width="7" height="9"/><path d="M60 10h4M60 12h4M60 14h4"/><rect x="103.5" y="4.5" width="16" height="15"/><path d="M108.5 4.5v9M114.5 4.5v9M103.5 13.5h11"/></g></svg>
<div class="a" style="left:1704px;top:951px;width:10px;height:1.5px;background:#444;"></div>
<div class="a" style="left:1720px;top:952px;width:125px;height:1px;background:#555;"></div>
<div class="a" style="left:1780px;top:945px;width:6px;height:14px;background:#444;"></div>
<svg class="a" style="left:1849px;top:945px" width="13" height="13"><path d="M6.5 1v11M1 6.5h11" stroke="#444" stroke-width="1.3"/></svg>
<div class="t" style="left:1876.94px;top:946.25px;font-size:12.7px;font-weight:400;color:#444;transform:scaleX(0.9641);transform-origin:0 0">100%</div>
</body></html>
